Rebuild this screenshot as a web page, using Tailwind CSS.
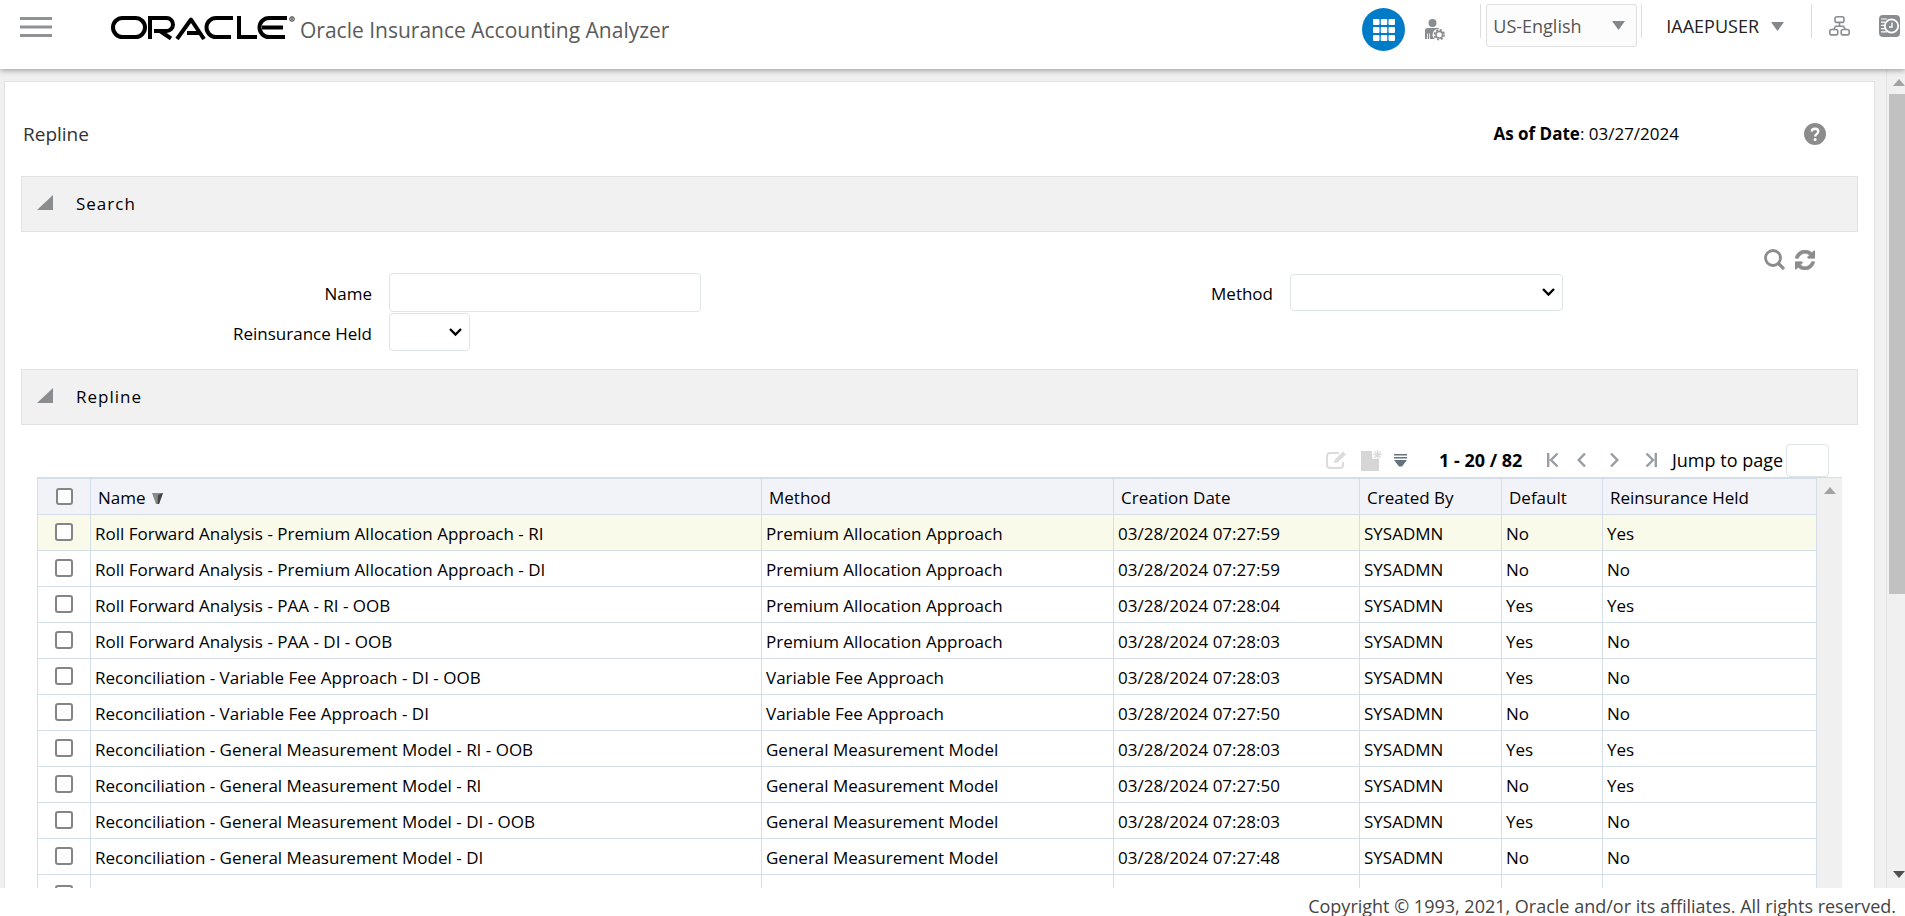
<!DOCTYPE html>
<html lang="en">
<head>
<meta charset="utf-8">
<meta name="viewport" content="width=device-width, initial-scale=1">
<title>Oracle Insurance Accounting Analyzer</title>
<script src="https://cdn.jsdelivr.net/npm/@tailwindcss/browser@4"></script>
</head>
<body class="flex h-screen flex-col overflow-hidden bg-white font-['Open_Sans','Noto_Sans',sans-serif] text-[17px] leading-6 text-black">

<header class="relative z-10 flex h-[69px] shrink-0 items-start bg-white pl-5 shadow-[0_1px_6px_rgba(0,0,0,0.4)]">
  <button type="button" aria-label="Menu" class="mt-4 h-6 w-8">
    <svg class="h-6 w-8" viewBox="0 0 32 24" fill="#8f9295"><path d="M0 1h32v3H0zM0 9.500h32v3H0zM0 18h32v3H0z"/></svg>
  </button>
  <svg class="mt-4 ml-[59px] h-6 w-[184px]" viewBox="0 0 184 24" fill="none" stroke="#000" stroke-width="4" role="img" aria-label="Oracle">
    <rect x="2" y="2" width="32" height="19" rx="9.500"/>
    <path d="M39 23V2h16.500a6.500 6.500 0 0 1 0 13H43M49 15l11 7.500"/>
    <path d="M66 23 80 3.500 93 23M76 17h13" stroke-linejoin="round"/>
    <path d="M122 2h-17a9.500 9.500 0 0 0 0 19h15"/>
    <path d="M128 0v21h18"/>
    <path d="M176 2h-18a9.500 9.500 0 0 0 0 19h16M151 11.500h21"/>
    <circle cx="181" cy="3" r="2.300" stroke-width="0.800"/>
    <path d="M180.300 4.400V1.800h.9a.7.7 0 0 1 0 1.400h-.9m1 0 .8 1.200" stroke-width="0.500"/>
  </svg>
  <h1 class="mt-4 ml-[5px] text-[21px] leading-7 whitespace-nowrap text-[#5a5a5a]">Oracle Insurance Accounting Analyzer</h1>

  <div class="ml-auto flex shrink-0 items-start">
    <button type="button" aria-label="Applications" class="mt-2 flex size-[43px] items-center justify-center rounded-full bg-[#007bc8]">
      <svg class="size-[22px]" viewBox="0 0 22 22" fill="#fff"><rect width="6.500" height="6" rx="1"/><rect x="7.750" width="6.500" height="6" rx="1"/><rect x="15.500" width="6.500" height="6" rx="1"/><rect y="8" width="6.500" height="6" rx="1"/><rect x="7.750" y="8" width="6.500" height="6" rx="1"/><rect x="15.500" y="8" width="6.500" height="6" rx="1"/><rect y="16" width="6.500" height="6" rx="1"/><rect x="7.750" y="16" width="6.500" height="6" rx="1"/><rect x="15.500" y="16" width="6.500" height="6" rx="1"/></svg>
    </button>
    <button type="button" aria-label="User settings" class="mt-[19px] ml-5 h-[22px] w-5">
      <svg class="h-[22px] w-5" viewBox="0 0 20 22" fill="#8a8d90"><circle cx="7.500" cy="4" r="4"/><path d="M0 20v-8.500Q0 9 2.500 9h10q1.500 0 2.300 1.200a5.600 5.600 0 0 0-5 9.800H5v-5.500h-.8V20H3v-5.500h-.8V20z"/><circle cx="14.300" cy="15.700" r="3.300" fill="none" stroke="#8a8d90" stroke-width="1.600"/><circle cx="14.300" cy="15.700" r="4.800" fill="none" stroke="#8a8d90" stroke-width="1.800" stroke-dasharray="2 1.770"/></svg>
    </button>
    <div class="mt-1 ml-[35px] h-[34px] w-px bg-[#dcdcdc]"></div>
    <div class="relative mt-1 ml-[5px]">
      <select aria-label="Language" class="h-[43px] w-[151px] appearance-none rounded-[3px] border border-[#dfdfdf] bg-[#fcfcfc] pl-[6px] text-[18px] text-[#555]"><option>US-English</option></select>
      <svg class="pointer-events-none absolute top-[17px] right-3 h-[9px] w-[13px]" viewBox="0 0 13 9" fill="#85888b"><path d="M0 0h13L6.500 9z"/></svg>
    </div>
    <div class="mt-1 ml-1 h-[34px] w-px bg-[#dcdcdc]"></div>
    <button type="button" class="mt-[14px] ml-6 flex items-center gap-3 text-[18px] leading-6 text-[#222]">IAAEPUSER
      <svg class="h-[9px] w-[13px]" viewBox="0 0 13 9" fill="#85888b"><path d="M0 0h13L6.500 9z"/></svg>
    </button>
    <div class="mt-1 ml-[27px] h-[34px] w-px bg-[#dcdcdc]"></div>
    <button type="button" aria-label="Hierarchy" class="mt-4 ml-[17px] h-5 w-[21px]">
      <svg class="h-5 w-[21px]" viewBox="0 0 21 20" fill="none" stroke="#8a8d90" stroke-width="1.600"><rect x="6" y=".8" width="9" height="5.600" rx="2"/><rect x=".8" y="13.500" width="8" height="5.400" rx="2"/><rect x="12.200" y="13.500" width="8" height="5.400" rx="2"/><path d="M10.500 6.400v3.200M4.800 13.500l1.700-3.300h8l1.700 3.300"/></svg>
    </button>
    <button type="button" aria-label="Recent" class="mt-[15px] mr-[5px] ml-[29px] h-[22px] w-[21px]">
      <svg class="h-[22px] w-[21px]" viewBox="0 0 21 22"><rect width="21" height="22" rx="4" fill="#8a8d90"/><path d="M2 4h6M2 7.200h4M2 10.400h3M2 13.600h4M2 16.800h6" stroke="#fff" stroke-width="1.200"/><circle cx="12.500" cy="11" r="6.700" fill="#8a8d90" stroke="#fff" stroke-width="1.800"/><path d="M13 7.500V12h-3" fill="none" stroke="#fff" stroke-width="1.300"/></svg>
    </button>
  </div>
</header>

<div class="flex min-h-0 flex-1 bg-[#f0f0f0]">
  <main class="mt-3 mr-[11px] ml-1 min-w-0 flex-1 overflow-hidden border border-b-0 border-[#e2e2e2] bg-white pr-4 pl-4">
    <div class="flex h-[94px] items-center pt-[10px]">
      <h2 class="ml-[2px] text-[19px] leading-7 text-[#333]">Repline</h2>
      <p class="ml-auto">
        <b>As of Date</b>: 03/27/2024</p>
      <button type="button" aria-label="Help" class="mr-8 ml-[125px] size-[22px]">
        <svg class="size-[22px]" viewBox="0 0 22 22"><circle cx="11" cy="11" r="11" fill="#8c8c8c"/><path d="M7.800 8.600C7.800 4.800 14.300 4.800 14.300 8.600c0 2.400-3.200 2.300-3.200 5" fill="none" stroke="#fff" stroke-width="2.300"/><circle cx="11.100" cy="16.400" r="1.500" fill="#fff"/></svg>
      </button>
    </div>

    <section>
      <h3 class="flex h-14 items-center gap-[23px] border border-[#e2e2e2] bg-[#f1f1f1] pl-[15px] text-[17px] tracking-[1px]">
        <button type="button" aria-label="Collapse search" class="mb-1 h-[15px] w-4"><svg class="h-[15px] w-4" viewBox="0 0 16 15" fill="#8a8d90"><path d="M16 0v15H0z"/></svg></button>Search
      </h3>
      <div class="flex h-[41px] items-center justify-end gap-[10px] pt-[14px] pr-[43px]">
        <button type="button" aria-label="Search" class="size-[21px]"><svg class="size-[21px]" viewBox="0 0 21 21" fill="none" stroke="#8c8c8c"><circle cx="9" cy="9" r="7.500" stroke-width="2.800"/><path d="m14 14 6 6" stroke-width="3.200"/></svg></button>
        <button type="button" aria-label="Reset" class="size-5"><svg class="size-5" viewBox="0 0 1536 1536" fill="#8c8c8c" stroke="#8c8c8c" stroke-width="50"><path d="M1511 928q0 5-1 7-64 268-268 434.500T764 1536q-146 0-282.500-55T238 1324l-129 129q-19 19-45 19t-45-19-19-45V960q0-26 19-45t45-19h448q26 0 45 19t19 45-19 45l-137 137q71 66 161 102t187 36q134 0 250-65t186-179q11-17 53-117 8-23 30-23h192q13 0 22.500 9.500t9.500 22.500zm25-800v448q0 26-19 45t-45 19h-448q-26 0-45-19t-19-45 19-45l138-138Q969 256 768 256q-134 0-250 65T332 500q-11 17-53 117-8 23-30 23H50q-13 0-22.500-9.500T18 608v-7q65-268 270-434.500T768 0q146 0 284 55.500T1297 212l130-129q19-19 45-19t45 19 19 45z"/></svg></button>
      </div>
      <div class="grid grid-cols-[351px_1fr_240px_568px] gap-x-[17px] gap-y-px">
        <label for="name" class="self-center pt-[3px] text-right">Name</label>
        <input id="name" type="text" class="h-[39px] w-[312px] rounded-[4px] border border-[#dfe4e7] bg-white px-2">
        <label for="method" class="self-center pt-[3px] text-right">Method</label>
        <div class="relative w-[273px]">
          <select id="method" class="mt-px h-[37px] w-full appearance-none rounded-[4px] border border-[#dfe4e7] bg-white px-2"><option></option></select>
          <svg class="pointer-events-none absolute top-[15px] right-2 h-[9px] w-[13px]" viewBox="0 0 13 9" fill="none" stroke="#000" stroke-width="2.400"><path d="m1 1 5.500 5.500L12 1"/></svg>
        </div>
        <label for="held" class="self-center pt-[3px] text-right">Reinsurance Held</label>
        <div class="relative w-[81px]">
          <select id="held" class="h-[38px] w-full appearance-none rounded-[4px] border border-[#dfe4e7] bg-white px-2"><option></option></select>
          <svg class="pointer-events-none absolute top-[15px] right-2 h-[9px] w-[13px]" viewBox="0 0 13 9" fill="none" stroke="#000" stroke-width="2.400"><path d="m1 1 5.500 5.500L12 1"/></svg>
        </div>
      </div>
    </section>

    <section class="mt-[18px]">
      <h3 class="flex h-14 items-center gap-[23px] border border-[#e2e2e2] bg-[#f1f1f1] pl-[15px] text-[17px] tracking-[1px]">
        <button type="button" aria-label="Collapse repline" class="mb-1 h-[15px] w-4"><svg class="h-[15px] w-4" viewBox="0 0 16 15" fill="#8a8d90"><path d="M16 0v15H0z"/></svg></button>Repline
      </h3>
      <div class="flex h-[52px] items-end justify-end pr-[29px]">
        <div class="flex h-[34px] items-center">
          <button type="button" aria-label="Edit" class="mr-[13px] h-5 w-[22px]"><svg class="h-5 w-[22px]" viewBox="0 0 22 20" fill="none" stroke="#dcdcdc" stroke-width="2"><path d="M13 3H4a3 3 0 0 0-3 3v9a3 3 0 0 0 3 3h10a3 3 0 0 0 3-3v-3"/><path d="m8 13 .8-3.500L17 1.500l3 3-8.500 8z" fill="#dcdcdc" stroke="none"/></svg></button>
          <button type="button" aria-label="New" class="mr-3 h-[21px] w-[21px]"><svg class="h-[21px] w-[21px]" viewBox="0 0 21 21" fill="#d6d6d6"><path d="M0 1h11v6q0 2 2 2h5v12H0z"/><path d="M16.500 0v9M12 4.500h9M13.300 1.300l6.400 6.400M19.700 1.300l-6.400 6.400" stroke="#dcdcdc" stroke-width="1.300"/></svg></button>
          <button type="button" aria-label="More actions" class="h-[13px] w-[13px]"><svg class="h-[13px] w-[13px]" viewBox="0 0 13 13" fill="#66737f"><path d="M0 0h13v1.500H0zM0 3h13v1.500H0zM0 6h13L8 12.500H5z"/></svg></button>
          <b class="ml-8 w-[88px] text-[18px] whitespace-nowrap">1 - 20 / 82</b>
          <button type="button" aria-label="First page" class="ml-5 h-4 w-3"><svg class="h-4 w-3" viewBox="0 0 12 16" fill="none" stroke="#979da3" stroke-width="2.400"><path d="M1.200 1v14M10.500 1.500 4 8l6.500 6.500"/></svg></button>
          <button type="button" aria-label="Previous page" class="ml-[18px] h-4 w-[9px]"><svg class="h-4 w-[9px]" viewBox="0 0 9 16" fill="none" stroke="#979da3" stroke-width="2.400"><path d="M8 1.500 1.700 8 8 14.500"/></svg></button>
          <button type="button" aria-label="Next page" class="ml-6 h-4 w-[9px]"><svg class="h-4 w-[9px]" viewBox="0 0 9 16" fill="none" stroke="#979da3" stroke-width="2.400"><path d="M1 1.500 7.300 8 1 14.500"/></svg></button>
          <button type="button" aria-label="Last page" class="ml-[26px] h-4 w-3"><svg class="h-4 w-3" viewBox="0 0 12 16" fill="none" stroke="#979da3" stroke-width="2.400"><path d="M10.800 1v14M1.500 1.500 8 8l-6.500 6.500"/></svg></button>
          <label for="jump" class="ml-[15px] w-[114px] text-[18px] whitespace-nowrap">Jump to page</label>
          <input id="jump" type="text" class="h-[33px] w-[43px] rounded-[4px] border border-[#dfe4e7] px-1">
        </div>
      </div>

      <div class="mr-4 ml-4 flex border-t border-[#d3dee8] bg-[#f0f0f0]">
        <table class="min-w-0 flex-1 table-fixed border-collapse bg-white [&_td]:h-9 [&_td]:border [&_td]:border-[#d3dee8] [&_td]:px-1 [&_td]:pt-[2px] [&_td]:whitespace-nowrap [&_th]:h-9 [&_th]:border [&_th]:border-[#d3dee8] [&_th]:px-[7px] [&_th]:pt-[2px] [&_th]:text-left [&_th]:font-normal [&_th]:whitespace-nowrap [&_tr:last-child_td]:h-10">
          <colgroup><col class="w-[53px]"><col><col class="w-[352px]"><col class="w-[246px]"><col class="w-[142px]"><col class="w-[101px]"><col class="w-[214px]"></colgroup>
          <thead class="bg-[#f2f3f8]">
            <tr>
              <th scope="col"><input type="checkbox" aria-label="Select all" class="mx-auto mb-[2px] block size-[17px] appearance-none rounded-[3px] border-2 border-[#858585] bg-white"></th>
              <th scope="col">Name <svg class="ml-[2px] inline h-[11px] w-[11px]" viewBox="0 0 11 11"><path d="M0 0h11L7 11H4z" fill="#8a8a8a"/><path d="M11 0 7 11H5.500L6 2z" fill="#444"/></svg></th>
              <th scope="col">Method</th><th scope="col">Creation Date</th><th scope="col">Created By</th><th scope="col">Default</th><th scope="col">Reinsurance Held</th>
            </tr>
          </thead>
          <tbody id="rows"></tbody>
        </table>
        <div class="flex w-[25px] shrink-0 justify-center pt-[9px]"><svg class="h-[7px] w-3" viewBox="0 0 12 7" fill="#a3a3a3"><path d="M6 0l6 7H0z"/></svg></div>
      </div>
    </section>
  </main>

  <div class="flex w-[19px] shrink-0 flex-col border-l border-[#e2e2e2] pl-[2px]">
    <div class="flex h-[25px] shrink-0 items-end justify-end pb-2"><svg class="h-[7px] w-3 shrink-0" viewBox="0 0 12 7" fill="#a3a3a3"><path d="M6 0l6 7H0z"/></svg></div>
    <div class="h-[61%] bg-[#c1c1c1]"></div>
    <div class="flex-1"></div>
    <div class="flex h-[17px] shrink-0 justify-end"><svg class="h-[7px] w-3" viewBox="0 0 12 7" fill="#505050"><path d="M0 0h12L6 7z"/></svg></div>
  </div>
</div>

<footer class="h-7 shrink-0 bg-white pt-[6px] pr-[9px] text-right text-[18px] leading-6 whitespace-nowrap text-[#444]">Copyright © 1993, 2021, Oracle and/or its affiliates. All rights reserved.</footer>

<script>
  const P = 'Premium Allocation Approach', V = 'Variable Fee Approach', G = 'General Measurement Model';
  const data = [
    ['Roll Forward Analysis - Premium Allocation Approach - RI', P, '07:27:59', 'No', 'Yes'],
    ['Roll Forward Analysis - Premium Allocation Approach - DI', P, '07:27:59', 'No', 'No'],
    ['Roll Forward Analysis - PAA - RI - OOB', P, '07:28:04', 'Yes', 'Yes'],
    ['Roll Forward Analysis - PAA - DI - OOB', P, '07:28:03', 'Yes', 'No'],
    ['Reconciliation - Variable Fee Approach - DI - OOB', V, '07:28:03', 'Yes', 'No'],
    ['Reconciliation - Variable Fee Approach - DI', V, '07:27:50', 'No', 'No'],
    ['Reconciliation - General Measurement Model - RI - OOB', G, '07:28:03', 'Yes', 'Yes'],
    ['Reconciliation - General Measurement Model - RI', G, '07:27:50', 'No', 'Yes'],
    ['Reconciliation - General Measurement Model - DI - OOB', G, '07:28:03', 'Yes', 'No'],
    ['Reconciliation - General Measurement Model - DI', G, '07:27:48', 'No', 'No'],
    ['Profit and Loss - Variable Fee Approach - DI - OOB', V, '07:28:03', 'Yes', 'No']
  ];
  document.getElementById('rows').innerHTML = data.map((r, i) =>
    `<tr class="${i === 0 ? 'bg-[#f9faea]' : 'bg-white'}">
      <td><input type="checkbox" aria-label="Select ${r[0]}" class="mx-auto mb-1 block size-[18px] appearance-none rounded-[3px] border-2 border-[#858585] bg-white"></td>
      <td>${r[0]}</td><td>${r[1]}</td><td>03/28/2024 ${r[2]}</td><td>SYSADMN</td><td>${r[3]}</td><td>${r[4]}</td></tr>`).join('');
</script>
</body>
</html>
